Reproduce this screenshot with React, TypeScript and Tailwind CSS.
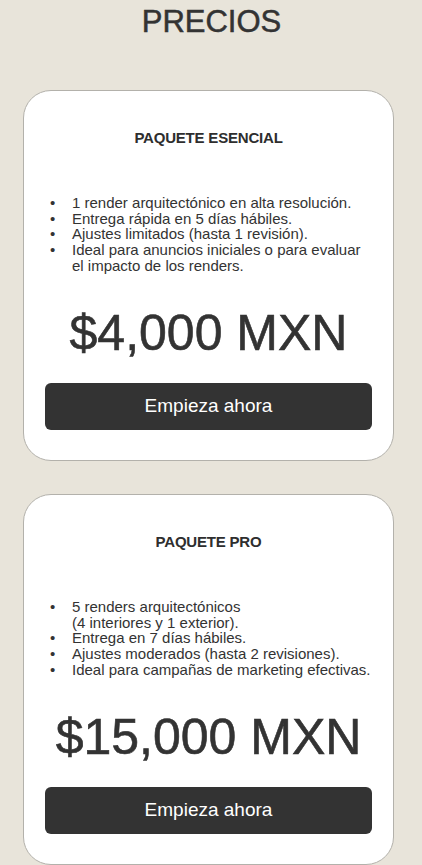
import React from 'react';

interface Plan {
  name: string;
  items: React.ReactNode[];
  price: string;
}

const plans: Plan[] = [
  {
    name: 'PAQUETE ESENCIAL',
    items: [
      '1 render arquitectónico en alta resolución.',
      'Entrega rápida en 5 días hábiles.',
      'Ajustes limitados (hasta 1 revisión).',
      'Ideal para anuncios iniciales o para evaluar el impacto de los renders.',
    ],
    price: '$4,000 MXN',
  },
  {
    name: 'PAQUETE PRO',
    items: [
      <>5 renders arquitectónicos<br />(4 interiores y 1 exterior).</>,
      'Entrega en 7 días hábiles.',
      'Ajustes moderados (hasta 2 revisiones).',
      'Ideal para campañas de marketing efectivas.',
    ],
    price: '$15,000 MXN',
  },
];

const PlanCard: React.FC<{ plan: Plan }> = ({ plan }) => (
  <div className="ml-[23px] w-[371px] h-[371px] bg-white border border-[#b3b1ab] rounded-[28px] pt-[37px] px-[21px] flex flex-col">
    <h3 className="text-center text-[15px] leading-[20px] font-bold tracking-[-0.2px] text-[#2e2e2e]">{plan.name}</h3>
    <ul className="mt-[47px] pl-[5px] text-[15px] leading-[15.7px] text-[#333]">
      {plan.items.map((item, i) => (
        <li key={i} className="flex">
          <span className="w-[22px] shrink-0">•</span>
          <span className="flex-1">{item}</span>
        </li>
      ))}
    </ul>
    <div className="mt-[34.5px] text-center text-[50px] leading-[50px] text-[#333] whitespace-nowrap [-webkit-text-stroke:0.6px_#333]">{plan.price}</div>
    <button className="mt-[25px] h-[47px] w-full bg-[#333333] rounded-[6px] text-white text-[19px]">Empieza ahora</button>
  </div>
);

export default function App() {
  return (
    <div className="min-h-screen bg-[#e8e4da] pt-[6px] pb-[40px]" style={{ fontFamily: '"Liberation Sans", Arial, sans-serif' }}>
      <h1 className="text-center text-[31px] leading-[31px] text-[#333] pl-[1px] [-webkit-text-stroke:0.5px_#333]">PRECIOS</h1>
      <div className="mt-[53px] flex flex-col gap-[33px]">
        {plans.map(p => (
          <PlanCard key={p.name} plan={p} />
        ))}
      </div>
    </div>
  );
}
